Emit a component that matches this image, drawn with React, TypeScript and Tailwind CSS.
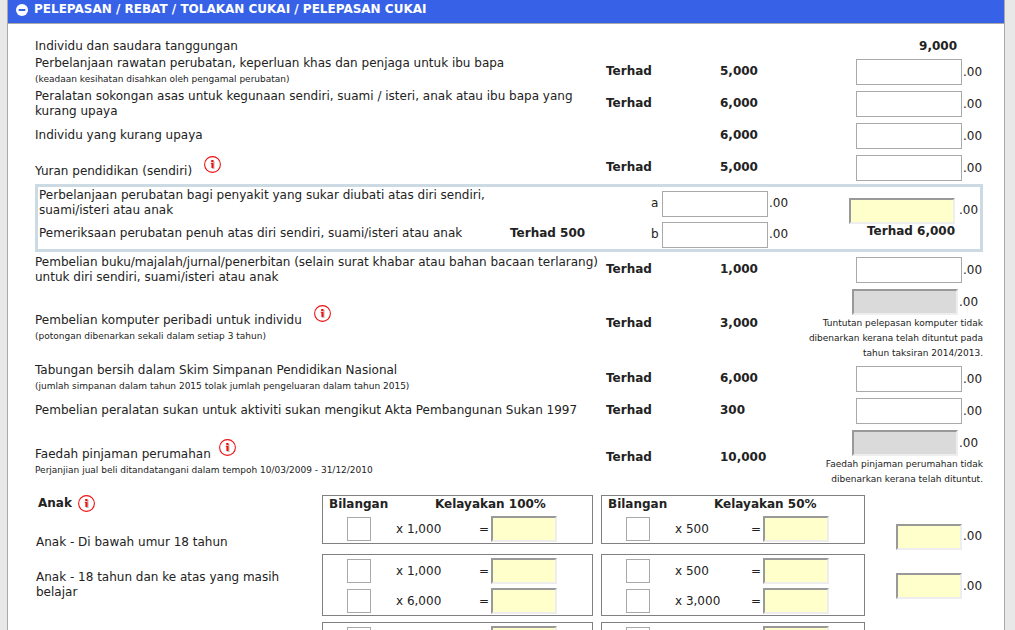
import { useState, type ReactNode } from "react";
import clsx from "clsx";

type FieldTone = "plain" | "total" | "locked";

type FieldProps = {
  label: string;
  tone?: FieldTone;
  size?: "sm" | "md" | "lg";
};

function Field({ label, tone = "plain", size = "lg" }: FieldProps) {
  return (
    <input
      type="text"
      aria-label={label}
      readOnly={tone !== "plain"}
      className={clsx(
        "block shrink-0 rounded-none px-1 text-right outline-none",
        size === "sm" && "h-6 w-6",
        size === "md" && "h-[26px] w-[66px]",
        size === "lg" && "h-[26px] w-[106px]",
        tone === "plain" && "border border-[#a9a9a9] bg-white",
        tone !== "plain" &&
          "border-2 border-t-[#999] border-r-[#eee] border-b-[#eee] border-l-[#999]",
        tone === "total" && "bg-[#ffffcc]",
        tone === "locked" && "bg-[#dadada]",
      )}
    />
  );
}

function InfoButton({ topic }: { topic: string }) {
  return (
    <button type="button" aria-label={`Maklumat ${topic}`} className="block shrink-0">
      <svg viewBox="0 0 17 17" className="block h-[17px] w-[17px]">
        <circle cx="8.5" cy="8.5" r="7.9" fill="#fff" stroke="#f01010" strokeWidth="1.1" />
        <path d="M9 5h1.6v8H8V12z" fill="#c4c4c4" />
        <path d="M7.2 4h2.3v2H7.2zM6.7 6.7h2.8V12H7.4V7.8h-.7z" fill="#f01010" />
      </svg>
    </button>
  );
}

type ReliefRowProps = {
  title: string;
  note?: string;
  info?: "near" | "far";
  limited?: boolean;
  amount: string;
  message?: string;
};

function ReliefRow({ title, note, info, limited = true, amount, message }: ReliefRowProps) {
  return (
    <div className="grid min-h-8 grid-cols-[minmax(0,1fr)_114px_136px_127px] items-center">
      <div className={message ? "pt-0.5" : "pb-px"}>
        {info ? (
          <div className="flex h-[23px] items-end">
            <span>{title}</span>
            <span className={clsx("self-start", info === "far" ? "ml-3" : "ml-2")}>
              <InfoButton topic={title} />
            </span>
          </div>
        ) : (
          <p>{title}</p>
        )}
        {note && <p className="text-[9px] leading-4">{note}</p>}
      </div>
      <b className={message ? "" : "pb-0.5"}>{limited && "Terhad"}</b>
      <b className={message ? "" : "pb-0.5"}>{amount}</b>
      {message ? (
        <div className="flex flex-col items-end gap-px pt-[3px]">
          <div className="flex items-center pr-1">
            <Field label={title} tone="locked" />
            <span className="w-[21px] pl-px">.00</span>
          </div>
          <p className="w-[184px] text-right text-[9px] leading-[15px]">{message}</p>
        </div>
      ) : (
        <div className="flex items-center">
          <Field label={title} />
          <span className="w-[21px] pl-px">.00</span>
        </div>
      )}
    </div>
  );
}

function MedicalBox() {
  return (
    <div className="flex border-3 border-[#ccdbe3]">
      <div className="min-w-0 flex-1">
        <div className="grid h-[31px] grid-cols-[minmax(0,1fr)_141px_141px] items-center pl-px">
          <p>
            Perbelanjaan perubatan bagi penyakit yang sukar diubati atas diri sendiri, suami/isteri
            atau anak
          </p>
          <span />
          <div className="flex items-center pt-0.5">
            <span className="w-[11px]">a</span>
            <Field label="Perbelanjaan perubatan penyakit sukar diubati" />
            <span className="pl-px">.00</span>
          </div>
        </div>
        <div className="grid h-[31px] grid-cols-[minmax(0,1fr)_141px_141px] items-center pl-px">
          <p>Pemeriksaan perubatan penuh atas diri sendiri, suami/isteri atau anak</p>
          <b>Terhad 500</b>
          <div className="flex items-center pt-0.5">
            <span className="w-[11px]">b</span>
            <Field label="Pemeriksaan perubatan penuh" />
            <span className="pl-px">.00</span>
          </div>
        </div>
      </div>
      <div className="flex w-[188px] flex-col items-end justify-center">
        <div className="flex items-center gap-1">
          <Field label="Jumlah perbelanjaan perubatan" tone="total" />
          <span className="w-[21px]">.00</span>
        </div>
        <b className="pr-[25px]">Terhad 6,000</b>
      </div>
    </div>
  );
}

type ShareBoxProps = {
  share: "100%" | "50%";
  rates: string[];
  heading?: boolean;
};

function ShareBox({ share, rates, heading }: ShareBoxProps) {
  return (
    <div className="border border-[#808080]">
      {heading && (
        <div className="flex h-[17px] items-center pl-1.5">
          <b className="w-[106px]">Bilangan</b>
          <b>Kelayakan {share}</b>
        </div>
      )}
      {rates.map((rate, i) => (
        <div
          key={i}
          className={clsx(
            "grid h-[30px] items-center pt-0.5",
            share === "100%" ? "grid-cols-[73px_83px_1fr]" : "grid-cols-[73px_76px_1fr]",
          )}
        >
          <div className="pl-6">
            <Field label={`Bilangan ${share} ${rate}`} size="sm" />
          </div>
          <span>{rate && `x ${rate}`}</span>
          <div className="flex items-center">
            <span className="w-3">{rate && "="}</span>
            <Field label={`Jumlah ${share} ${rate}`} tone="total" size="md" />
          </div>
        </div>
      ))}
    </div>
  );
}

type ChildRowProps = {
  label?: ReactNode;
  name?: string;
  full: string[];
  half: string[];
  heading?: boolean;
};

function ChildRow({ label, name, full, half, heading }: ChildRowProps) {
  return (
    <div
      className={clsx(
        "grid grid-cols-[minmax(0,1fr)_271px_272px_118px]",
        heading ? "mb-2.5" : "mb-1.5",
      )}
    >
      <div className="flex flex-col justify-center pl-px">{label}</div>
      <ShareBox share="100%" rates={full} heading={heading} />
      <div className="pl-2">
        <ShareBox share="50%" rates={half} heading={heading} />
      </div>
      {name && (
        <div className={clsx("flex items-center justify-end", heading ? "-mb-2.5 pt-6" : "pt-0.5")}>
          <Field label={name} tone="total" size="md" />
          <span className="w-[21px] pl-px">.00</span>
        </div>
      )}
    </div>
  );
}

export default function App() {
  const [open, setOpen] = useState(true);

  return (
    <div className="h-screen overflow-hidden bg-[#e8e8e8] pr-2.5 pl-[7px] font-['DejaVu_Sans',Verdana,sans-serif] text-[12px] leading-[15px] text-[#222]">
      <section className="min-h-full border-x border-[#aaa] bg-white">
        <h2 className="border-b border-[#aaa] bg-[#3762e7]">
          <button
            type="button"
            aria-expanded={open}
            onClick={() => setOpen(!open)}
            className="flex h-[23px] w-full items-center gap-1.5 pb-1 pl-2 text-left font-bold text-white"
          >
            <svg viewBox="0 0 12 12" className="h-3 w-3 shrink-0">
              <circle cx="6" cy="6" r="6" fill="#fff" />
              <rect x="2.7" y="5" width="6.6" height="2" fill="#3762e7" />
            </svg>
            PELEPASAN / REBAT / TOLAKAN CUKAI / PELEPASAN CUKAI
          </button>
        </h2>

        {open && (
          <form className="pt-3 pr-[21px] pl-[27px]">
            <div className="flex h-5 items-center justify-between pr-[26px]">
              <p>Individu dan saudara tanggungan</p>
              <b>9,000</b>
            </div>
            <ReliefRow
              title="Perbelanjaan rawatan perubatan, keperluan khas dan penjaga untuk ibu bapa"
              note="(keadaan kesihatan disahkan oleh pengamal perubatan)"
              amount="5,000"
            />
            <ReliefRow
              title="Peralatan sokongan asas untuk kegunaan sendiri, suami / isteri, anak atau ibu bapa yang kurang upaya"
              amount="6,000"
            />
            <ReliefRow title="Individu yang kurang upaya" limited={false} amount="6,000" />
            <ReliefRow title="Yuran pendidikan (sendiri)" info="far" amount="5,000" />
            <MedicalBox />
            <div className="pt-0.5">
              <ReliefRow
                title="Pembelian buku/majalah/jurnal/penerbitan (selain surat khabar atau bahan bacaan terlarang) untuk diri sendiri, suami/isteri atau anak"
                amount="1,000"
              />
            </div>
            <ReliefRow
              title="Pembelian komputer peribadi untuk individu"
              note="(potongan dibenarkan sekali dalam setiap 3 tahun)"
              info="far"
              amount="3,000"
              message="Tuntutan pelepasan komputer tidak dibenarkan kerana telah dituntut pada tahun taksiran 2014/2013."
            />
            <div className="pt-0.5">
              <ReliefRow
                title="Tabungan bersih dalam Skim Simpanan Pendidikan Nasional"
                note="(jumlah simpanan dalam tahun 2015 tolak jumlah pengeluaran dalam tahun 2015)"
                amount="6,000"
              />
            </div>
            <ReliefRow
              title="Pembelian peralatan sukan untuk aktiviti sukan mengikut Akta Pembangunan Sukan 1997"
              amount="300"
            />
            <ReliefRow
              title="Faedah pinjaman perumahan"
              note="Perjanjian jual beli ditandatangani dalam tempoh 10/03/2009 - 31/12/2010"
              info="near"
              amount="10,000"
              message="Faedah pinjaman perumahan tidak dibenarkan kerana telah dituntut."
            />

            <div className="pt-2">
              <ChildRow
                heading
                name="Jumlah anak di bawah umur 18 tahun"
                label={
                  <div className="-mb-2.5 flex flex-1 flex-col justify-between pb-1">
                    <div className="flex items-center gap-1.5 pl-0.5">
                      <b>Anak</b>
                      <InfoButton topic="Anak" />
                    </div>
                    <p>Anak - Di bawah umur 18 tahun</p>
                  </div>
                }
                full={["1,000"]}
                half={["500"]}
              />
              <ChildRow
                name="Jumlah anak 18 tahun dan ke atas"
                label={<p className="pr-6">Anak - 18 tahun dan ke atas yang masih belajar</p>}
                full={["1,000", "6,000"]}
                half={["500", "3,000"]}
              />
              <ChildRow full={["", ""]} half={["", ""]} />
            </div>
          </form>
        )}
      </section>
    </div>
  );
}
